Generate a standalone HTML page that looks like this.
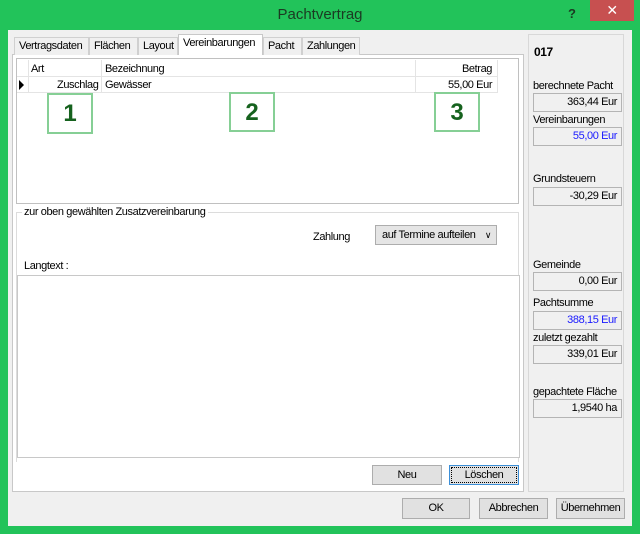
<!DOCTYPE html>
<html><head><meta charset="utf-8"><style>
*{box-sizing:border-box;margin:0;padding:0}
body{width:640px;height:534px;background:#22c35a;font-family:"Liberation Sans",sans-serif;font-size:11px;color:#000;position:relative;overflow:hidden;letter-spacing:-0.4px}
.a{position:absolute;white-space:nowrap}
.title{left:0;top:0;width:640px;height:30px;text-align:center;line-height:30px;font-size:15px;color:#1b3a22;letter-spacing:0}
.client{left:8px;top:30px;width:624px;height:496px;background:#f0f0f0}
.tab{height:18px;top:37px;border:1px solid #d0d0d0;border-bottom:none;background:#f0f0f0;line-height:16px;padding:0 4px}
.tab.sel{top:34px;height:21px;background:#fff;border-color:#c8c8c8;z-index:3}
.panel{left:12px;top:54px;width:512px;height:438px;background:#fff;border:1px solid #c8c8c8}
.box{border:1px solid #c0c0c0;background:#fff}
.num{border:2px solid #86cf95;background:#fff;color:#16621e;font-weight:bold;font-size:24px;text-align:center;line-height:38px;letter-spacing:0}
.btn{border:1px solid #adadad;background:#e1e1e1;text-align:center;line-height:18px}
.fld{left:533px;width:89px;height:19px;border:1px solid #b4b4b4;background:#f0f0f0;text-align:right;padding-right:4px;line-height:17px}
.lbl{left:533px}
</style></head><body>
<div class="a title">Pachtvertrag</div>
<div class="a" style="left:568px;top:6px;font-size:13px;font-weight:bold;color:#1b3a22">?</div>
<div class="a" style="left:590px;top:0;width:44px;height:21px;background:#c75050;color:#fff;text-align:center;line-height:21px;font-size:14px">✕</div>
<div class="a client"></div>
<div class="a panel"></div>
<div class="a tab" style="left:14px;width:75px">Vertragsdaten</div>
<div class="a tab" style="left:89px;width:49px">Flächen</div>
<div class="a tab" style="left:138px;width:40px">Layout</div>
<div class="a tab sel" style="left:178px;width:85px">Vereinbarungen</div>
<div class="a tab" style="left:263px;width:39px">Pacht</div>
<div class="a tab" style="left:302px;width:58px">Zahlungen</div>
<div class="a box" style="left:16px;top:58px;width:503px;height:146px"></div>
<div class="a" style="left:17px;top:59px;width:480px;height:18px;border-bottom:1px solid #e4e4e4"></div>
<div class="a" style="left:28px;top:60px;width:1px;height:33px;background:#e4e4e4"></div>
<div class="a" style="left:101px;top:60px;width:1px;height:33px;background:#e4e4e4"></div>
<div class="a" style="left:415px;top:60px;width:1px;height:33px;background:#e4e4e4"></div>
<div class="a" style="left:497px;top:60px;width:1px;height:33px;background:#e4e4e4"></div>
<div class="a" style="left:17px;top:92px;width:480px;height:1px;background:#e4e4e4"></div>
<div class="a" style="left:31px;top:63px">Art</div>
<div class="a" style="left:105px;top:63px">Bezeichnung</div>
<div class="a" style="left:462px;top:63px">Betrag</div>
<div class="a" style="left:19px;top:80px;width:0;height:0;border-top:5px solid transparent;border-bottom:5px solid transparent;border-left:5px solid #000"></div>
<div class="a" style="left:57px;top:79px">Zuschlag</div>
<div class="a" style="left:105px;top:79px">Gewässer</div>
<div class="a" style="left:448px;top:79px">55,00 Eur</div>
<div class="a num" style="left:47px;top:93px;width:46px;height:41px">1</div>
<div class="a num" style="left:229px;top:92px;width:46px;height:40px">2</div>
<div class="a num" style="left:434px;top:92px;width:46px;height:40px">3</div>
<div class="a num" style="left:238px;top:325px;width:46px;height:40px">4</div>
<div class="a" style="left:16px;top:212px;width:503px;height:250px;border:1px solid #dcdcdc;border-bottom:none"></div>
<div class="a" style="left:22px;top:206px;background:#fff;padding:0 2px">zur oben gewählten Zusatzvereinbarung</div>
<div class="a" style="left:313px;top:231px">Zahlung</div>
<div class="a" style="left:375px;top:225px;width:122px;height:20px;border:1px solid #adadad;background:#e5e5e5;line-height:18px;padding-left:6px">auf Termine aufteilen<span style="position:absolute;right:5px;font-size:9px">∨</span></div>
<div class="a" style="left:24px;top:260px">Langtext :</div>
<div class="a box" style="left:17px;top:275px;width:503px;height:183px;border-color:#c8c8c8"></div>
<div class="a btn" style="left:372px;top:465px;width:70px;height:20px">Neu</div>
<div class="a btn" style="left:449px;top:465px;width:70px;height:20px;border:1px solid #3c8fd8;outline:1px dotted #000;outline-offset:-3px">Löschen</div>
<div class="a" style="left:528px;top:34px;width:96px;height:458px;border:1px solid #d8d8d8"></div>
<div class="a" style="left:534px;top:45px;font-weight:bold;font-size:12px">017</div>
<div class="a lbl" style="top:80px">berechnete Pacht</div>
<div class="a fld" style="top:93px">363,44 Eur</div>
<div class="a lbl" style="top:114px">Vereinbarungen</div>
<div class="a fld" style="top:127px;color:#1a1aff">55,00 Eur</div>
<div class="a lbl" style="top:173px">Grundsteuern</div>
<div class="a fld" style="top:187px">-30,29 Eur</div>
<div class="a lbl" style="top:259px">Gemeinde</div>
<div class="a fld" style="top:272px">0,00 Eur</div>
<div class="a lbl" style="top:297px">Pachtsumme</div>
<div class="a fld" style="top:311px;color:#1a1aff">388,15 Eur</div>
<div class="a lbl" style="top:332px">zuletzt gezahlt</div>
<div class="a fld" style="top:345px">339,01 Eur</div>
<div class="a lbl" style="top:386px">gepachtete Fläche</div>
<div class="a fld" style="top:399px">1,9540 ha</div>
<div class="a btn" style="left:402px;top:498px;width:68px;height:21px">OK</div>
<div class="a btn" style="left:479px;top:498px;width:69px;height:21px">Abbrechen</div>
<div class="a btn" style="left:556px;top:498px;width:69px;height:21px">Übernehmen</div>
</body></html>
